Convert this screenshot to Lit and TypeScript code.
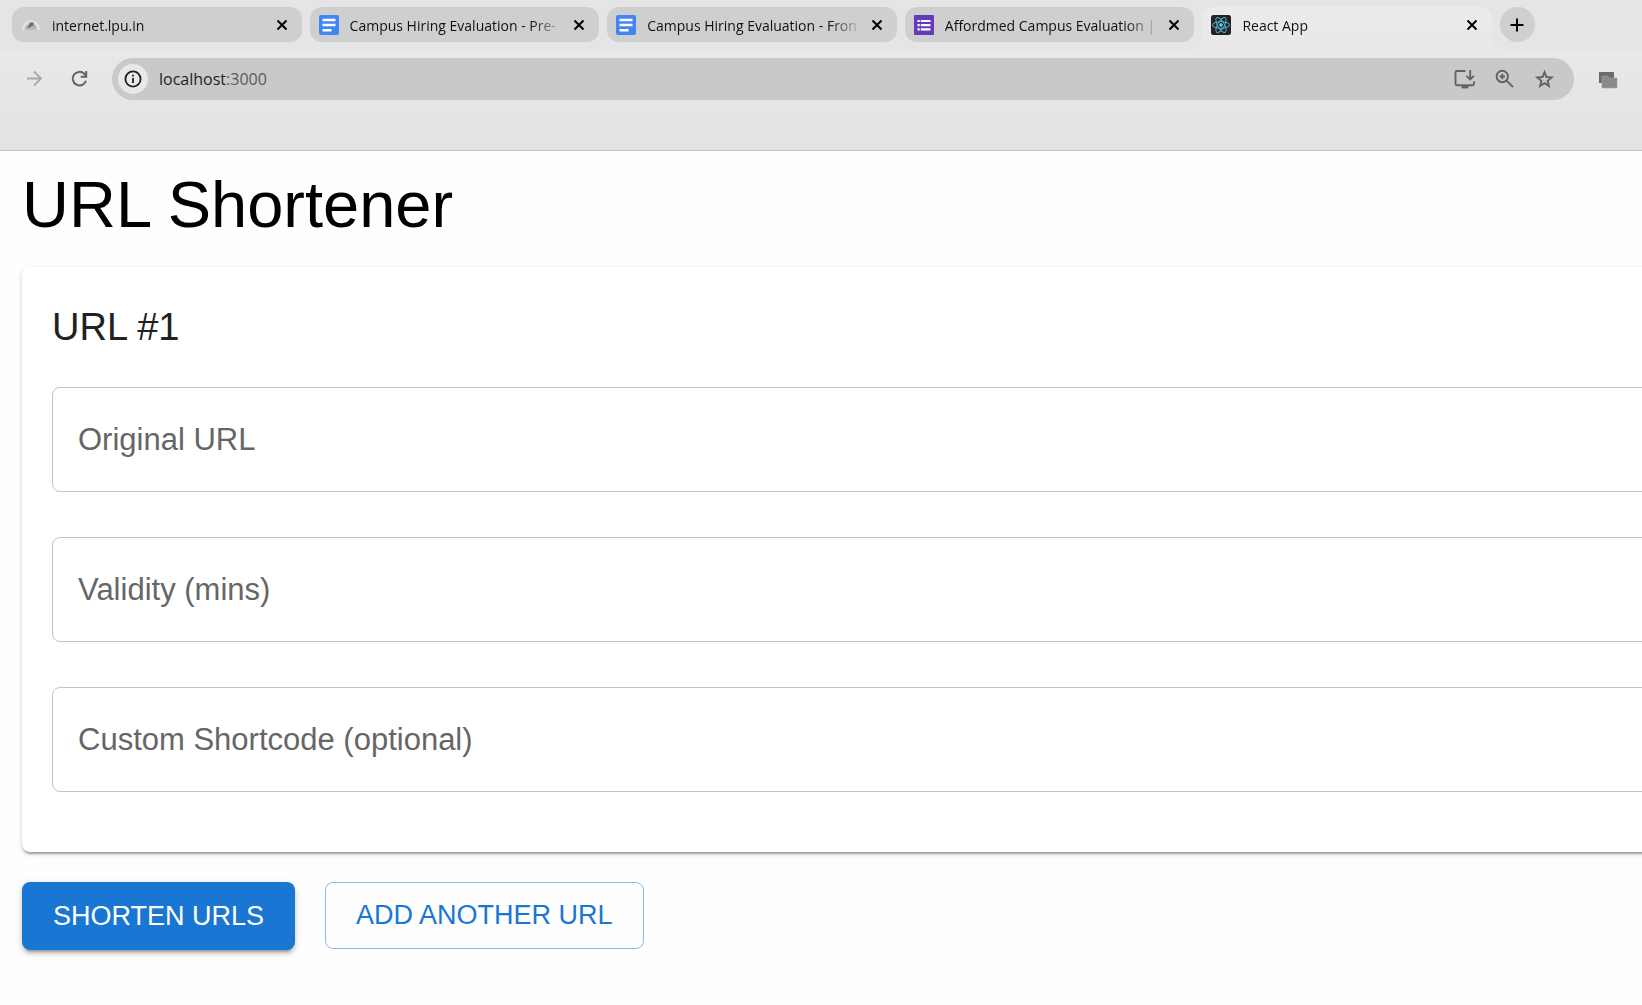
import { LitElement, html, css, svg, nothing } from "lit";
import { customElement, property, state } from "lit/decorators.js";
import { classMap } from "lit/directives/class-map.js";

type IconName = "gauge" | "docs" | "forms" | "react";

const favicons: Record<IconName, unknown> = {
  gauge: svg`
    <path d="M1 15A9 9.500 0 0 1 19 15L17 15A7 7.500 0 0 0 3 15Z" fill="#e6e6e6"/>
    <path d="M4.500 14.500A5.500 6 0 0 1 15.500 14.500Z" fill="#b4b4b4"/>
    <path d="M6 12.500L9 9L8 7.500H12.500V11.500L11 10.500L9 12.500Z" fill="#6a6a6a"/>`,
  docs: svg`
    <rect width="20" height="20" rx="2" fill="#4285f4"/>
    <path d="M3.500 5H16.500M3.500 10H16.500M3.500 15.200H12.500" stroke="#fff" stroke-width="2.400"/>`,
  forms: svg`
    <rect width="20" height="20" rx="1" fill="#673ab7"/>
    <path d="M6.800 6H16.500M6.800 10.200H16.500M6.800 14.400H16.500" stroke="#fff" stroke-width="2.200"/>
    <path d="M3.500 6H5.700M3.500 10.200H5.700M3.500 14.400H5.700" stroke="#fff" stroke-width="2.200"/>`,
  react: svg`
    <rect width="20" height="20" rx="2.500" fill="#222"/>
    <g fill="none" stroke="#4fb3cf" stroke-width="1">
      <ellipse cx="10" cy="10" rx="8.500" ry="3.300"/>
      <ellipse cx="10" cy="10" rx="8.500" ry="3.300" transform="rotate(60 10 10)"/>
      <ellipse cx="10" cy="10" rx="8.500" ry="3.300" transform="rotate(120 10 10)"/>
    </g>
    <circle cx="10" cy="10" r="1.700" fill="#61dafb"/>`,
};

@customElement("browser-tab")
export class BrowserTab extends LitElement {
  @property() label = "";
  @property() icon: IconName = "docs";
  @property({ type: Boolean, reflect: true }) active = false;

  static styles = css`
    :host {
      display: block;
      flex: 1 1 0;
      min-width: 0;
    }
    .tab {
      position: relative;
      display: flex;
      align-items: center;
      gap: 11px;
      height: 35px;
      padding: 0 9px;
      box-sizing: border-box;
      border-radius: 12px;
      background: #cfcfcf;
      color: #111;
    }
    .tab.active {
      height: 43px;
      padding-bottom: 8px;
      border-radius: 12px 12px 0 0;
      background: linear-gradient(#ebebeb, #e8e8e8);
    }
    .tab.active::before,
    .tab.active::after {
      content: "";
      position: absolute;
      bottom: 0;
      width: 12px;
      height: 12px;
    }
    .tab.active::before {
      right: 100%;
      background: radial-gradient(circle at 0 0, transparent 12px, #e8e8e8 12px);
    }
    .tab.active::after {
      left: 100%;
      background: radial-gradient(circle at 100% 0, transparent 12px, #e8e8e8 12px);
    }
    .favicon {
      flex: none;
      width: 20px;
      height: 20px;
    }
    .label {
      flex: 1;
      min-width: 0;
      overflow: hidden;
      white-space: nowrap;
      font: 14px/20px "Open Sans", "Noto Sans", sans-serif;
      padding-top: 2px;
      mask-image: linear-gradient(to right, #000 calc(100% - 34px), transparent);
    }
    .close {
      flex: none;
      display: grid;
      place-items: center;
      width: 22px;
      height: 22px;
      margin-left: -8px;
      padding: 0;
      border: 0;
      border-radius: 11px;
      background: none;
      color: #000;
    }
  `;

  render() {
    return html`<div class=${classMap({ tab: true, active: this.active })}>
      <svg class="favicon" viewBox="0 0 20 20" aria-hidden="true">${favicons[this.icon]}</svg>
      <span class="label">${this.label}</span>
      <button class="close" type="button" aria-label="Close tab">
        <svg width="12" height="12" viewBox="0 0 12 12" fill="none" stroke="currentColor" stroke-width="2">
          <path d="M1.500 1.500L10.500 10.500M10.500 1.500L1.500 10.500" />
        </svg>
      </button>
    </div>`;
  }
}

@customElement("browser-bar")
export class BrowserBar extends LitElement {
  static styles = css`
    :host {
      display: block;
      border-bottom: 1px solid #c3c3c3;
      background: #e3e3e3;
      font-family: "Open Sans", "Noto Sans", sans-serif;
    }
    .strip {
      display: flex;
      gap: 8px;
      height: 50px;
      padding: 7px 107px 0 12px;
      box-sizing: border-box;
      background: #e5e5e5;
    }
    .round {
      display: grid;
      place-items: center;
      padding: 0;
      border: 0;
      border-radius: 50%;
      background: none;
      color: #5f6368;
    }
    .add {
      flex: none;
      width: 35px;
      height: 35px;
      background: #cfcfcf;
      color: #000;
    }
    .toolbar {
      display: flex;
      align-items: center;
      gap: 24px;
      height: 100px;
      padding: 8px 24px 50px;
      box-sizing: border-box;
      background: linear-gradient(#e8e8e8, #e3e3e3);
    }
    .nav {
      display: flex;
      gap: 24px;
    }
    .nav .round {
      width: 20px;
      height: 30px;
    }
    .nav .forward {
      color: #a9a9a9;
    }
    .omnibox {
      flex: 1;
      display: flex;
      align-items: center;
      gap: 11px;
      height: 42px;
      padding: 0 17px 0 6px;
      box-sizing: border-box;
      border-radius: 21px;
      background: #c9c9c9;
    }
    .info {
      width: 30px;
      height: 30px;
      background: #e8e8e8;
      color: #1f1f1f;
    }
    .address {
      flex: 1;
      font-size: 16px;
      line-height: 24px;
      color: #1c1f2b;
    }
    .port {
      color: #5a5a5a;
    }
    .actions {
      display: flex;
      gap: 16px;
    }
    .actions .round {
      width: 24px;
      height: 24px;
    }
    .window {
      width: 20px;
      height: 24px;
    }
  `;

  private tabs: { label: string; icon: IconName; active?: boolean }[] = [
    { label: "internet.lpu.in", icon: "gauge" },
    { label: "Campus Hiring Evaluation - Pre-", icon: "docs" },
    { label: "Campus Hiring Evaluation - Fron", icon: "docs" },
    { label: "Affordmed Campus Evaluation |", icon: "forms" },
    { label: "React App", icon: "react", active: true },
  ];

  render() {
    return html`
      <div class="strip">
        ${this.tabs.map(
          (t) => html`<browser-tab .label=${t.label} .icon=${t.icon} ?active=${t.active}></browser-tab>`
        )}
        <button class="round add" type="button" aria-label="New tab">
          <svg width="14" height="14" viewBox="0 0 14 14" stroke="currentColor" stroke-width="2">
            <path d="M7 .5V13.500M.5 7H13.500" />
          </svg>
        </button>
      </div>
      <div class="toolbar">
        <div class="nav">
          <button class="round forward" type="button" aria-label="Forward">
            <svg width="20" height="20" viewBox="0 0 20 20" fill="none" stroke="currentColor" stroke-width="1.800">
              <path d="M3 9.500H17M10 2.500L17 9.500L10 16.500" />
            </svg>
          </button>
          <button class="round" type="button" aria-label="Reload">
            <svg width="20" height="20" viewBox="0 0 20 20" fill="none" stroke="currentColor" stroke-width="2">
              <path d="M18 11.800A6.800 6.800 0 1 1 16.300 4.800L18 6.500" />
              <path d="M18.200 2V7.700H12.700" />
            </svg>
          </button>
        </div>
        <div class="omnibox">
          <button class="round info" type="button" aria-label="Site information">
            <svg width="18" height="18" viewBox="0 0 18 18" fill="none" stroke="currentColor" stroke-width="1.800">
              <circle cx="9" cy="9" r="7.600" />
              <path d="M9 8V13M9 4.800V6.600" />
            </svg>
          </button>
          <span class="address">localhost<span class="port">:3000</span></span>
          <div class="actions">
            <button class="round" type="button" aria-label="Install app">
              <svg width="24" height="24" viewBox="0 0 24 24" fill="none" stroke="currentColor" stroke-width="1.900">
                <path d="M12.500 4H4Q2.500 4 2.500 5.500V16.700Q2.500 18.200 4 18.200H19.500Q21 18.200 21 16.700V14.500" />
                <path d="M17.200 3V12M13.500 8.800L17.200 12.500L20.900 8.800" />
                <path d="M8.500 19.800H15.500" stroke-width="3.200" />
              </svg>
            </button>
            <button class="round" type="button" aria-label="Zoom">
              <svg width="24" height="24" viewBox="0 0 24 24" fill="none" stroke="currentColor" stroke-width="1.900">
                <circle cx="9.300" cy="9.500" r="5.700" />
                <path d="M13.500 13.700L20 20.200M9.300 6.800V12.200M6.600 9.500H12" />
              </svg>
            </button>
            <button class="round" type="button" aria-label="Bookmark">
              <svg width="24" height="24" viewBox="0 0 24 24" fill="none" stroke="currentColor" stroke-width="1.900">
                <path d="M11.500 5.200L13.400 10L18.700 10.400L14.600 13.800L15.900 19L11.500 16.200L7.100 19L8.400 13.800L4.300 10.400L9.600 10Z" />
              </svg>
            </button>
          </div>
        </div>
        <button class="round window" type="button" aria-label="Extension">
          <svg width="20" height="20" viewBox="0 0 20 20">
            <path d="M1 3H16V14H1Z" fill="#6b6b6b" />
            <path d="M4 7H10L11 9H19V19H4Z" fill="#8a8a8a" stroke="#a2a2a2" stroke-width=".6" />
          </svg>
        </button>
      </div>
    `;
  }
}

@customElement("outlined-field")
export class OutlinedField extends LitElement {
  @property() label = "";
  @state() private value = "";

  static styles = css`
    :host {
      display: block;
    }
    .field {
      position: relative;
    }
    .label {
      position: absolute;
      top: 30px;
      left: 26px;
      color: #666;
      font-size: 31px;
      line-height: 45px;
      pointer-events: none;
    }
    .input {
      display: block;
      width: 100%;
      height: 105px;
      padding: 30px 26px;
      box-sizing: border-box;
      border: 1px solid #c4c4c4;
      border-radius: 8px;
      background: none;
      color: #212121;
      font: inherit;
      font-size: 31px;
    }
    .input:focus {
      outline: 2px solid #1976d2;
      outline-offset: -2px;
    }
  `;

  render() {
    return html`<div class="field">
      <input class="input" id="input" .value=${this.value}
        @input=${(e: Event) => (this.value = (e.target as HTMLInputElement).value)} />
      ${this.value
        ? nothing
        : html`<label class="label" for="input">${this.label}</label>`}
    </div>`;
  }
}

@customElement("app-root")
export class AppRoot extends LitElement {
  @state() private count = 1;

  static styles = css`
    :host {
      display: block;
      min-height: 100vh;
      overflow-x: clip;
      background: #fefefe;
      font-family: "Liberation Sans", Arial, sans-serif;
    }
    .page {
      padding: 15px 0 30px 22px;
    }
    .title {
      margin: 0 0 24px;
      color: #000;
      font-size: 65px;
      line-height: 77px;
      font-weight: 400;
    }
    .card {
      display: flex;
      flex-direction: column;
      margin: 0 -60px 30px 0;
      padding: 30px 30px 60px;
      border-radius: 8px;
      background: #fff;
      box-shadow: 0 4px 2px -2px rgba(0, 0, 0, 0.2), 0 2px 2px rgba(0, 0, 0, 0.14),
        0 2px 6px rgba(0, 0, 0, 0.12);
    }
    .heading {
      margin: 0 0 30px;
      color: #212121;
      font-size: 38px;
      line-height: 60px;
      font-weight: 400;
    }
    .fields {
      display: flex;
      flex-direction: column;
      gap: 45px;
    }
    .buttons {
      display: flex;
      align-items: flex-start;
      gap: 30px;
    }
    .button {
      margin: 0;
      border: 0;
      border-radius: 8px;
      font: inherit;
      font-size: 27px;
      line-height: 46px;
      text-transform: uppercase;
      cursor: pointer;
    }
    .primary {
      padding: 11px 31px;
      background: #1976d2;
      color: #fff;
      box-shadow: 0 6px 2px -4px rgba(0, 0, 0, 0.2), 0 4px 4px rgba(0, 0, 0, 0.14),
        0 2px 9px rgba(0, 0, 0, 0.12);
    }
    .secondary {
      padding: 9px 30px 10px;
      border: 1px solid #8cbae8;
      background: none;
      color: #1976d2;
    }
  `;

  render() {
    return html`
      <browser-bar></browser-bar>
      <main class="page">
        <h1 class="title">URL Shortener</h1>
        ${Array.from(
          { length: this.count },
          (_, i) => html`<section class="card">
            <h2 class="heading">URL #${i + 1}</h2>
            <div class="fields">
              <outlined-field label="Original URL"></outlined-field>
              <outlined-field label="Validity (mins)"></outlined-field>
              <outlined-field label="Custom Shortcode (optional)"></outlined-field>
            </div>
          </section>`
        )}
        <div class="buttons">
          <button class="button primary" type="button">Shorten URLs</button>
          <button class="button secondary" type="button" @click=${() => this.count++}>Add Another URL</button>
        </div>
      </main>
    `;
  }
}
